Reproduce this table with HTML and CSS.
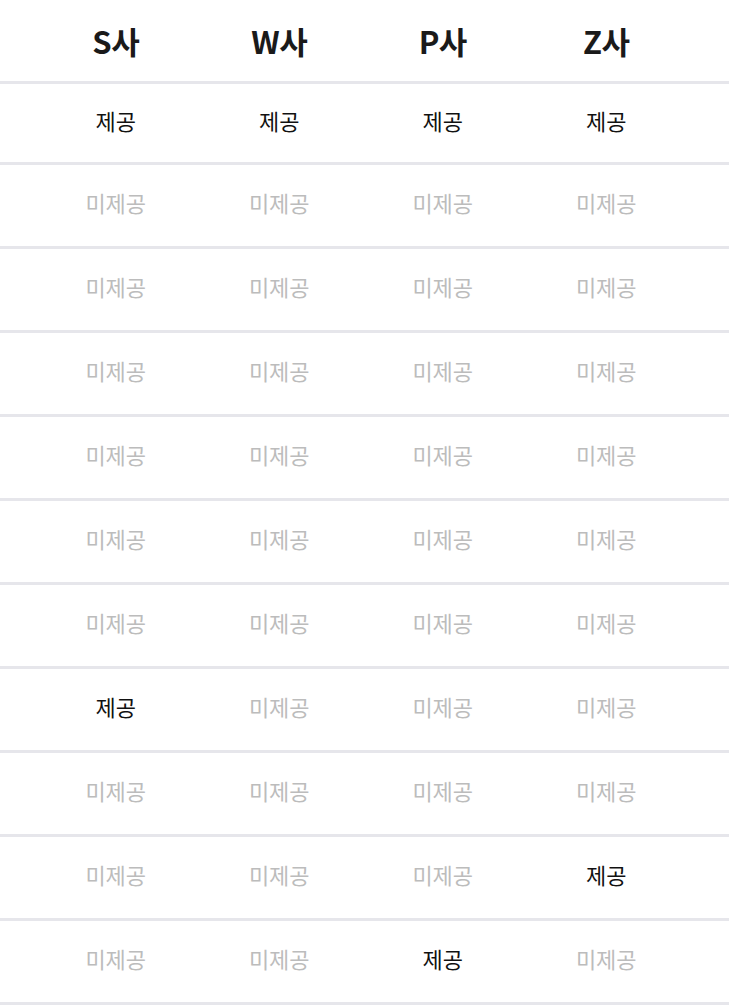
FILE: index.html
```html
<!DOCTYPE html>
<html lang="ko">
<head>
    <meta charset="UTF-8">
    <meta name="viewport" content="width=device-width, initial-scale=1.0">
    <title>제공 여부 비교</title>
    <link rel="stylesheet" href="styles.css">
</head>
<body>
    <div class="compare">
        <div class="row head">
            <div class="cell">S사</div>
            <div class="cell">W사</div>
            <div class="cell">P사</div>
            <div class="cell">Z사</div>
        </div>
        <div class="row first">
            <div class="cell yes">제공</div>
            <div class="cell yes">제공</div>
            <div class="cell yes">제공</div>
            <div class="cell yes">제공</div>
        </div>
        <div class="row">
            <div class="cell no">미제공</div>
            <div class="cell no">미제공</div>
            <div class="cell no">미제공</div>
            <div class="cell no">미제공</div>
        </div>
        <div class="row">
            <div class="cell no">미제공</div>
            <div class="cell no">미제공</div>
            <div class="cell no">미제공</div>
            <div class="cell no">미제공</div>
        </div>
        <div class="row">
            <div class="cell no">미제공</div>
            <div class="cell no">미제공</div>
            <div class="cell no">미제공</div>
            <div class="cell no">미제공</div>
        </div>
        <div class="row">
            <div class="cell no">미제공</div>
            <div class="cell no">미제공</div>
            <div class="cell no">미제공</div>
            <div class="cell no">미제공</div>
        </div>
        <div class="row">
            <div class="cell no">미제공</div>
            <div class="cell no">미제공</div>
            <div class="cell no">미제공</div>
            <div class="cell no">미제공</div>
        </div>
        <div class="row">
            <div class="cell no">미제공</div>
            <div class="cell no">미제공</div>
            <div class="cell no">미제공</div>
            <div class="cell no">미제공</div>
        </div>
        <div class="row">
            <div class="cell yes">제공</div>
            <div class="cell no">미제공</div>
            <div class="cell no">미제공</div>
            <div class="cell no">미제공</div>
        </div>
        <div class="row">
            <div class="cell no">미제공</div>
            <div class="cell no">미제공</div>
            <div class="cell no">미제공</div>
            <div class="cell no">미제공</div>
        </div>
        <div class="row">
            <div class="cell no">미제공</div>
            <div class="cell no">미제공</div>
            <div class="cell no">미제공</div>
            <div class="cell yes">제공</div>
        </div>
        <div class="row">
            <div class="cell no">미제공</div>
            <div class="cell no">미제공</div>
            <div class="cell yes">제공</div>
            <div class="cell no">미제공</div>
        </div>
    </div>
</body>
</html>
```

FILE: styles.css
```css
body {
    margin: 0;
    background-color: #ffffff;
    font-family: "Noto Sans CJK KR", "Noto Sans", sans-serif;
}
.compare {
    width: 729px;
}
.row {
    display: grid;
    grid-template-columns: repeat(4, 163.5px);
    align-items: center;
    height: 81px;
    padding-left: 34px;
    border-bottom: 3px solid #e6e6eb;
}
.row.first {
    height: 78px;
}
.cell {
    text-align: center;
    font-size: 22px;
    line-height: 1;
    padding-bottom: 7px;
}
.head .cell {
    font-size: 31px;
    font-weight: 700;
    color: #1a1a1a;
    padding-bottom: 1px;
    letter-spacing: -0.5px;
}
.yes {
    color: #111111;
}
.no {
    color: #bcbcbc;
}
```
